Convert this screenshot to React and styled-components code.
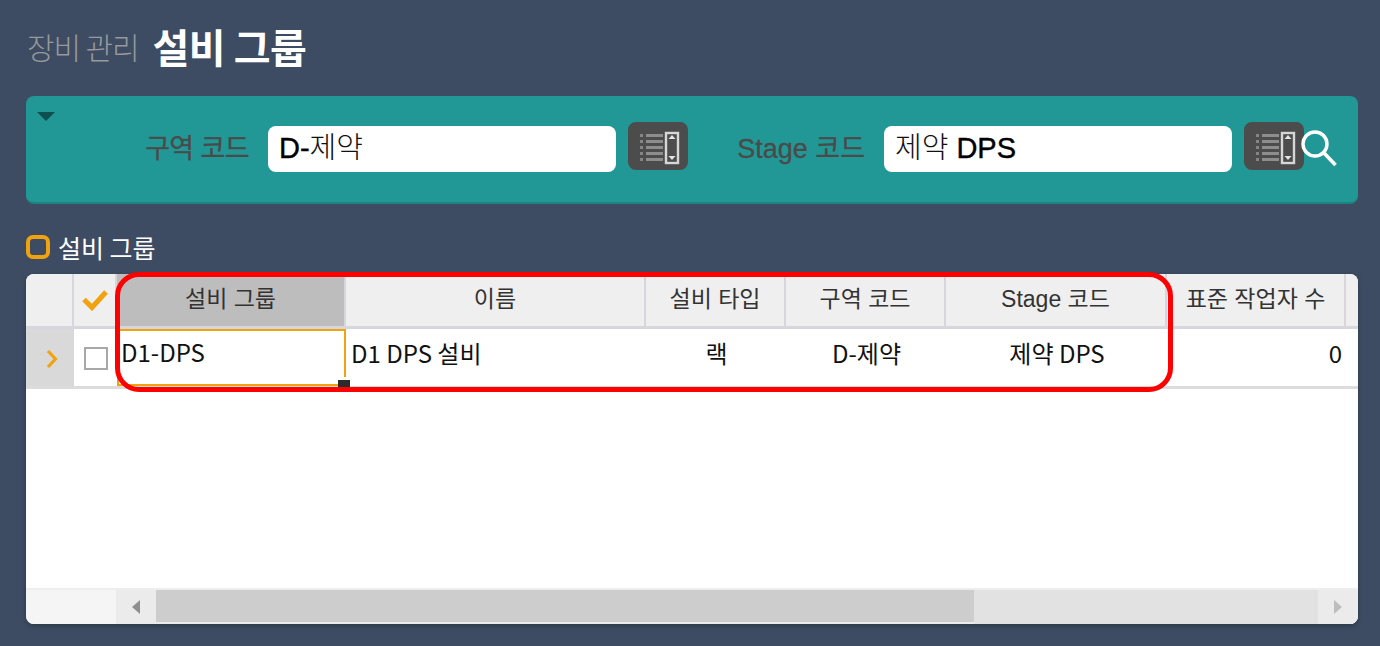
import React from 'react'
import styled, { createGlobalStyle } from 'styled-components'

const GlobalStyle = createGlobalStyle`
  html, body { margin: 0; padding: 0; }
  body {
    background: #3d4c62;
    font-family: "Liberation Sans", "Noto Sans CJK KR", sans-serif;
  }
`

const columns = [
  { title: '설비 그룹', width: 229, active: true },
  { title: '이름', width: 300 },
  { title: '설비 타입', width: 140 },
  { title: '구역 코드', width: 160 },
  { title: 'Stage 코드', width: 221 },
  { title: '표준 작업자 수', width: 179 },
]

const cells = [
  { text: 'D1-DPS', align: 'left', active: true },
  { text: 'D1 DPS 설비', align: 'left' },
  { text: '랙', align: 'center' },
  { text: 'D-제약', align: 'center' },
  { text: '제약 DPS', align: 'center' },
  { text: '0', align: 'right' },
]

function ListIcon() {
  return (
    <svg width="60" height="48" viewBox="0 0 60 48">
      {[13, 19, 25, 31, 37].map(y => (
        <g key={y}>
          <rect x="12" y={y - 1} width="3" height="3" fill="#858585" />
          <rect x="18" y={y - 1} width="17" height="3" fill="#8d8d8d" />
        </g>
      ))}
      <rect x="38" y="11" width="12" height="30" fill="none" stroke="#d6d6d6" strokeWidth="2.4" />
      <path d="M44 13l3.5 4h-7zM44 38l3.5-4h-7z" fill="#e4e4e4" />
    </svg>
  )
}

function Lookup() {
  return (
    <LookupButton>
      <ListIcon />
    </LookupButton>
  )
}

export default function App() {
  return (
    <Page>
      <GlobalStyle />
      <Heading>
        <Crumb>장비 관리</Crumb>
        <Title>설비 그룹</Title>
      </Heading>

      <SearchPanel>
        <Collapse />
        <Field $gap={90}>
          <FieldLabel $width={104} $spacing={-0.6}>구역 코드</FieldLabel>
          <FieldInput $width={348}><b>D-</b>제약</FieldInput>
          <Lookup />
        </Field>
        <Field $gap={48}>
          <FieldLabel $width={129}>Stage 코드</FieldLabel>
          <FieldInput $width={348}>제약 <b>DPS</b></FieldInput>
          <Lookup />
        </Field>
        <SearchIcon width="36" height="37" viewBox="0 0 36 37">
          <circle cx="14" cy="14" r="12" fill="none" stroke="#fff" strokeWidth="3.4" />
          <path d="M23 23L34.5 35" stroke="#fff" strokeWidth="3.6" />
        </SearchIcon>
      </SearchPanel>

      <SectionTitle>
        <Bullet />
        설비 그룹
      </SectionTitle>

      <Grid>
        <HeaderRow>
          <CornerCell />
          <CheckHeadCell>
            <svg width="26" height="22" viewBox="0 0 26 22">
              <path d="M2 10.5l8 8L24 3" fill="none" stroke="#f0a30e" strokeWidth="5" />
            </svg>
          </CheckHeadCell>
          {columns.map(col => (
            <HeadCell key={col.title} $width={col.width} $active={col.active}>{col.title}</HeadCell>
          ))}
        </HeaderRow>

        <DataRow>
          <RowMarker>
            <svg width="12" height="20" viewBox="0 0 12 20">
              <path d="M2 2l7.5 8L2 18" fill="none" stroke="#f0a30e" strokeWidth="3.2" />
            </svg>
          </RowMarker>
          <CheckCell><CheckBox /></CheckCell>
          {cells.map((cell, i) => (
            <DataCell key={cell.text} $width={columns[i].width} $align={cell.align} $active={cell.active}>
              {cell.text}
              {cell.active && <FillHandle />}
            </DataCell>
          ))}
        </DataRow>

        <GridBody />

        <ScrollBar>
          <ScrollGutter />
          <ScrollArrow>
            <svg width="8" height="16" viewBox="0 0 8 16"><path d="M8 1v14L0 8z" fill="#8f8f8f" /></svg>
          </ScrollArrow>
          <ScrollThumb />
          <ScrollTrack />
          <ScrollArrow>
            <svg width="8" height="16" viewBox="0 0 8 16"><path d="M0 1v14l8-7z" fill="#bdbdbd" /></svg>
          </ScrollArrow>
        </ScrollBar>

        <Highlight />
      </Grid>
    </Page>
  )
}

const Page = styled.div`
  width: 1380px;
  height: 646px;
  padding: 0 22px 0 26px;
  box-sizing: border-box;
  overflow: hidden;
`

const Heading = styled.div`
  height: 96px;
  display: flex;
  align-items: center;
  gap: 14px;
  font-family: "Noto Sans CJK KR", sans-serif;
  padding: 0 0 4px 1px;
  box-sizing: border-box;
`

const Crumb = styled.span`
  font-size: 30px;
  font-weight: 300;
  color: #97999c;
  letter-spacing: -1.1px;
`

const Title = styled.span`
  font-size: 40px;
  font-weight: 700;
  color: #fff;
  letter-spacing: -0.5px;
`

const SearchPanel = styled.div`
  position: relative;
  height: 108px;
  background: #229896;
  border-bottom: 2px solid #1c8381;
  border-radius: 8px;
  box-sizing: border-box;
  display: flex;
  align-items: flex-start;
  padding-top: 25px;
`

const Collapse = styled.div`
  width: 0;
  height: 0;
  margin: -9px 0 0 11px;
  border-left: 9px solid transparent;
  border-right: 9px solid transparent;
  border-top: 9px solid #0e4f50;
`

const Field = styled.div`
  display: flex;
  align-items: flex-start;
  margin-left: ${props => props.$gap}px;
`

const FieldLabel = styled.label`
  width: ${props => props.$width}px;
  height: 50px;
  line-height: 56px;
  text-align: right;
  font-size: 27px;
  letter-spacing: ${props => props.$spacing || 0}px;
  color: #4a4a4a;
  white-space: nowrap;
  -webkit-text-stroke: 0.3px #4a4a4a;
  font-family: "Liberation Sans", "Noto Sans CJK KR", sans-serif;
`

const FieldInput = styled.div`
  width: ${props => props.$width}px;
  height: 46px;
  margin: 5px 12px 0 19px;
  padding-left: 11px;
  box-sizing: border-box;
  background: #fff;
  border-radius: 8px;
  color: #111;
  font-size: 29px;
  font-weight: 300;
  line-height: 44px;
  white-space: nowrap;
  font-family: "Liberation Sans", "Noto Sans CJK KR", sans-serif;
  b { font-weight: 400; color: #000; -webkit-text-stroke: 0.4px #000; }
`

const LookupButton = styled.div`
  width: 60px;
  height: 48px;
  margin-top: 1px;
  background: #4c4c4c;
  border-radius: 8px;
`

const SearchIcon = styled.svg`
  position: absolute;
  left: 1275px;
  top: 34px;
`

const SectionTitle = styled.div`
  height: 70px;
  display: flex;
  align-items: flex-end;
  gap: 8px;
  padding-bottom: 12px;
  box-sizing: border-box;
  color: #fff;
  font-size: 25px;
  line-height: 30px;
  font-family: "Noto Sans CJK KR", sans-serif;
`

const Bullet = styled.span`
  width: 24px;
  height: 24px;
  margin-bottom: 3px;
  box-sizing: border-box;
  border: 4px solid #f0a30e;
  border-radius: 7px;
`

const Grid = styled.div`
  position: relative;
  width: 1332px;
  height: 350px;
  background: #fff;
  border-radius: 8px;
  display: flex;
  flex-direction: column;
  font-family: "Noto Sans CJK KR", sans-serif;
  box-shadow: 0 2px 5px rgba(0, 0, 0, 0.25);
`

const HeaderRow = styled.div`
  display: flex;
  height: 55px;
  background: #efefef;
  border-bottom: 3px solid #d6d6dc;
  border-radius: 8px 8px 0 0;
  box-sizing: border-box;
  overflow: hidden;
`

const CornerCell = styled.div`
  width: 48px;
  border-right: 2px solid #d6d6dc;
  box-sizing: border-box;
`

const CheckHeadCell = styled.div`
  width: 43px;
  border-right: 2px solid #d6d6dc;
  box-sizing: border-box;
  display: flex;
  align-items: center;
  justify-content: center;
`

const HeadCell = styled.div`
  width: ${props => props.$width}px;
  flex: none;
  box-sizing: border-box;
  border-right: 2px solid #d6d6dc;
  background: ${props => (props.$active ? '#bdbdbd' : 'transparent')};
  color: #333;
  font-size: 23px;
  line-height: 51px;
  text-align: center;
  white-space: nowrap;
  font-family: "Liberation Sans", "Noto Sans CJK KR", sans-serif;
`

const DataRow = styled.div`
  display: flex;
  height: 60px;
  border-bottom: 3px solid #dcdcdc;
  box-sizing: border-box;
`

const RowMarker = styled.div`
  width: 48px;
  background: #d9d9d9;
  box-sizing: border-box;
  padding: 2px 0 0 20px;
  display: flex;
  align-items: center;
`

const CheckCell = styled.div`
  width: 43px;
  display: flex;
  align-items: center;
  justify-content: center;
`

const CheckBox = styled.span`
  width: 24px;
  height: 23px;
  box-sizing: border-box;
  border: 2px solid #a8a8a8;
  margin-top: 2px;
`

const DataCell = styled.div`
  position: relative;
  width: ${props => props.$width}px;
  flex: none;
  box-sizing: border-box;
  padding: 0 4px 0 5px;
  text-align: ${props => props.$align};
  color: #111;
  font-size: 24px;
  line-height: 48px;
  white-space: nowrap;
  ${props => props.$active && `
    border: 2px solid #f0a30e;
    padding-left: 2px;
    line-height: 41px;
  `}
`

const FillHandle = styled.span`
  position: absolute;
  right: -6px;
  bottom: -8px;
  width: 12px;
  height: 12px;
  background: #2b2b2b;
  box-shadow: 0 -3px 0 #fff;
`

const GridBody = styled.div`
  flex: 1;
`

const ScrollBar = styled.div`
  height: 36px;
  display: flex;
  background: #f5f5f5;
  border-top: 2px solid #eeeeee;
  border-radius: 0 0 8px 8px;
  box-sizing: border-box;
  overflow: hidden;
`

const ScrollGutter = styled.div`
  width: 90px;
`

const ScrollArrow = styled.div`
  width: 40px;
  background: #ebebeb;
  display: flex;
  align-items: center;
  justify-content: center;
`

const ScrollThumb = styled.div`
  width: 818px;
  background: #cdcdcd;
  border-bottom: 2px solid #ebebeb;
`

const ScrollTrack = styled.div`
  flex: 1;
  background: #e2e2e2;
`

const Highlight = styled.div`
  position: absolute;
  left: 89px;
  top: -2px;
  width: 1058px;
  height: 120px;
  box-sizing: border-box;
  border: 5px solid #fe0000;
  border-radius: 24px;
  pointer-events: none;
`
